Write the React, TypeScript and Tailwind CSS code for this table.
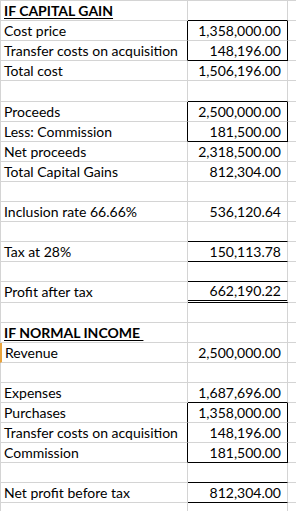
import React from 'react';

type Row = {
  label?: string;
  value?: string;
  head?: boolean;
  h: number;
  leftBlack?: boolean; // black right edge of column A (left edge of box)
  rightBlack?: boolean; // black right edge of column B
  bottom?: 'black' | 'double';
  active?: boolean;
};

const rows: Row[] = [
  { label: 'IF CAPITAL GAIN', head: true, h: 20, bottom: 'black' },
  { label: 'Cost price', value: '1,358,000.00', h: 20, leftBlack: true, rightBlack: true },
  { label: 'Transfer costs on acquisition', value: '148,196.00', h: 20, leftBlack: true, rightBlack: true, bottom: 'black' },
  { label: 'Total cost', value: '1,506,196.00', h: 20 },
  { h: 21, bottom: 'black' },
  { label: 'Proceeds', value: '2,500,000.00', h: 20, leftBlack: true, rightBlack: true },
  { label: 'Less: Commission', value: '181,500.00', h: 20, leftBlack: true, rightBlack: true, bottom: 'black' },
  { label: 'Net proceeds', value: '2,318,500.00', h: 20 },
  { label: 'Total Capital Gains', value: '812,304.00', h: 20 },
  { h: 20 },
  { label: 'Inclusion rate 66.66%', value: '536,120.64', h: 20 },
  { h: 20, bottom: 'black' },
  { label: 'Tax at 28%', value: '150,113.78', h: 20, bottom: 'black' },
  { h: 20, bottom: 'black' },
  { label: 'Profit after tax', value: '662,190.22', h: 21, bottom: 'double' },
  { h: 20 },
  { label: 'IF NORMAL INCOME\u00a0', head: true, h: 20 },
  { label: 'Revenue', value: '2,500,000.00', h: 20, active: true },
  { h: 20 },
  { label: 'Expenses', value: '1,687,696.00', h: 20, bottom: 'black' },
  { label: 'Purchases', value: '1,358,000.00', h: 20, leftBlack: true, rightBlack: true },
  { label: 'Transfer costs on acquisition', value: '148,196.00', h: 20, leftBlack: true, rightBlack: true },
  { label: 'Commission', value: '181,500.00', h: 20, leftBlack: true, rightBlack: true, bottom: 'black' },
  { h: 20, bottom: 'black' },
  { label: 'Net profit before tax', value: '812,304.00', h: 20, bottom: 'black' },
  { h: 9 },
];

const SheetRow: React.FC<{ row: Row }> = ({ row }) => {
  const aClass = [
    'w-[188px] shrink-0 border-l border-r border-b border-b-[#d4d4d4] pl-[3px] overflow-visible whitespace-nowrap',
    row.active ? 'border-l-2 border-l-[#e8a33c] pl-[2px]' : 'border-l-[#d4d4d4]',
    row.leftBlack ? 'border-r-black' : 'border-r-[#d4d4d4]',
  ].join(' ');

  const bClass = [
    'w-[100px] shrink-0 border-r text-right pr-[6px] whitespace-nowrap',
    row.rightBlack ? 'border-r-black' : 'border-r-[#d4d4d4]',
    row.bottom === 'double'
      ? 'border-b-[3px] border-double border-b-black leading-[17px]'
      : row.bottom === 'black'
        ? 'border-b border-b-black leading-[19px]'
        : 'border-b border-b-[#d4d4d4] leading-[19px]',
  ].join(' ');

  return (
    <div className="flex" style={{ height: row.h }}>
      <div className={`${aClass} leading-[19px]`}>
        {row.head ? (
          <span className="font-bold underline underline-offset-[2px]">{row.label}</span>
        ) : (
          row.label
        )}
      </div>
      <div className={bClass}>{row.value}</div>
      <div className="flex-1 border-b border-b-[#d4d4d4]" />
    </div>
  );
};

export default function App() {
  return (
    <div
      className="w-[296px] h-[511px] overflow-hidden bg-white text-black text-[14px] border-t border-t-[#d4d4d4]"
      style={{ fontFamily: 'Lato, "Noto Sans", sans-serif' }}
    >
      {rows.map((row, i) => (
        <SheetRow key={i} row={row} />
      ))}
    </div>
  );
}
